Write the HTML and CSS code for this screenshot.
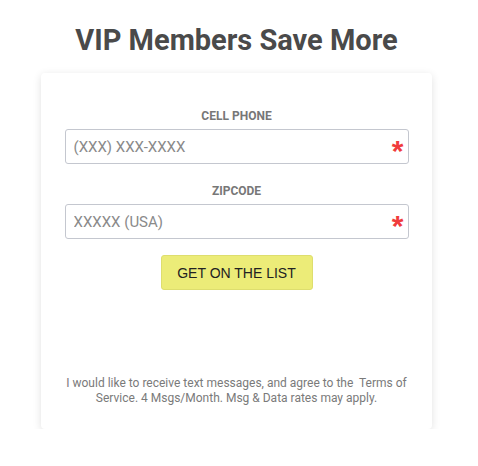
FILE: index.html
```html
<!DOCTYPE html>
<html lang="en">
<head>
    <meta charset="UTF-8">
    <meta name="viewport" content="width=device-width, initial-scale=1.0">
    <title>VIP Members Save More</title>
    <link rel="stylesheet" href="styles.css">
</head>
<body>

    <div class="wrap">
        <h1>VIP Members Save More</h1>

        <div class="card">
            <!-- campos obrigatorios -->
            <label class="field-label" for="phone">CELL PHONE</label>
            <div class="field">
                <input id="phone" type="tel" placeholder="(XXX) XXX-XXXX">
                <span class="req">*</span>
            </div>

            <label class="field-label" for="zip">ZIPCODE</label>
            <div class="field">
                <input id="zip" type="text" placeholder="XXXXX (USA)">
                <span class="req">*</span>
            </div>

            <button class="btn-list">GET ON THE LIST</button>

            <p class="terms">I would like to receive text messages, and agree to the&nbsp; Terms of Service. 4 Msgs/Month. Msg &amp; Data rates may apply.</p>
        </div>
    </div>

</body>
</html>
```

FILE: styles.css
```css
body {
    margin: 0;
    padding: 0;
    background: #fff;
    font-family: Roboto, 'Liberation Sans', sans-serif;
}

.wrap {
    width: 391px;
    margin-left: 41px;
}

h1 {
    margin: 21px 0 0;
    font-size: 29px;
    line-height: 38px;
    font-weight: 700;
    color: #4a4a4a;
    text-align: center;
}

.card {
    margin-top: 14px;
    height: 356px;
    box-sizing: border-box;
    padding: 36px 24px 0;
    background: #fff;
    border-radius: 4px;
    box-shadow: 0 2px 8px rgba(0, 0, 0, 0.12);
    display: flex;
    flex-direction: column;
    align-items: center;
}

.field-label {
    font-size: 12px;
    font-weight: 700;
    color: #777;
    line-height: 14px;
    margin-bottom: 6px;
}

.field {
    position: relative;
    width: 344px;
    margin-bottom: 20px;
}

.field input {
    width: 100%;
    height: 35px;
    box-sizing: border-box;
    border: 1px solid #c4c7cf;
    border-radius: 3px;
    padding: 0 8px;
    font-family: Roboto, sans-serif;
    font-size: 15px;
    color: #555;
    outline: none;
}

.field input::placeholder {
    color: #8a8a8a;
}

.req {
    position: absolute;
    right: 5px;
    top: 7px;
    color: #f03c3c;
    font-family: 'Liberation Sans', sans-serif;
    font-size: 30px;
    font-weight: 700;
    line-height: 30px;
}

.btn-list {
    margin-top: -4px;
    width: 152px;
    height: 35px;
    background-color: #ecec78;
    border: 1px solid #dede6e;
    border-radius: 3px;
    font-family: 'Liberation Sans', sans-serif;
    font-size: 14px;
    color: #222;
    cursor: pointer;
}

.terms {
    margin: 86px 0 0;
    font-size: 12px;
    line-height: 15px;
    color: #7a7a7a;
    text-align: center;
}
```
